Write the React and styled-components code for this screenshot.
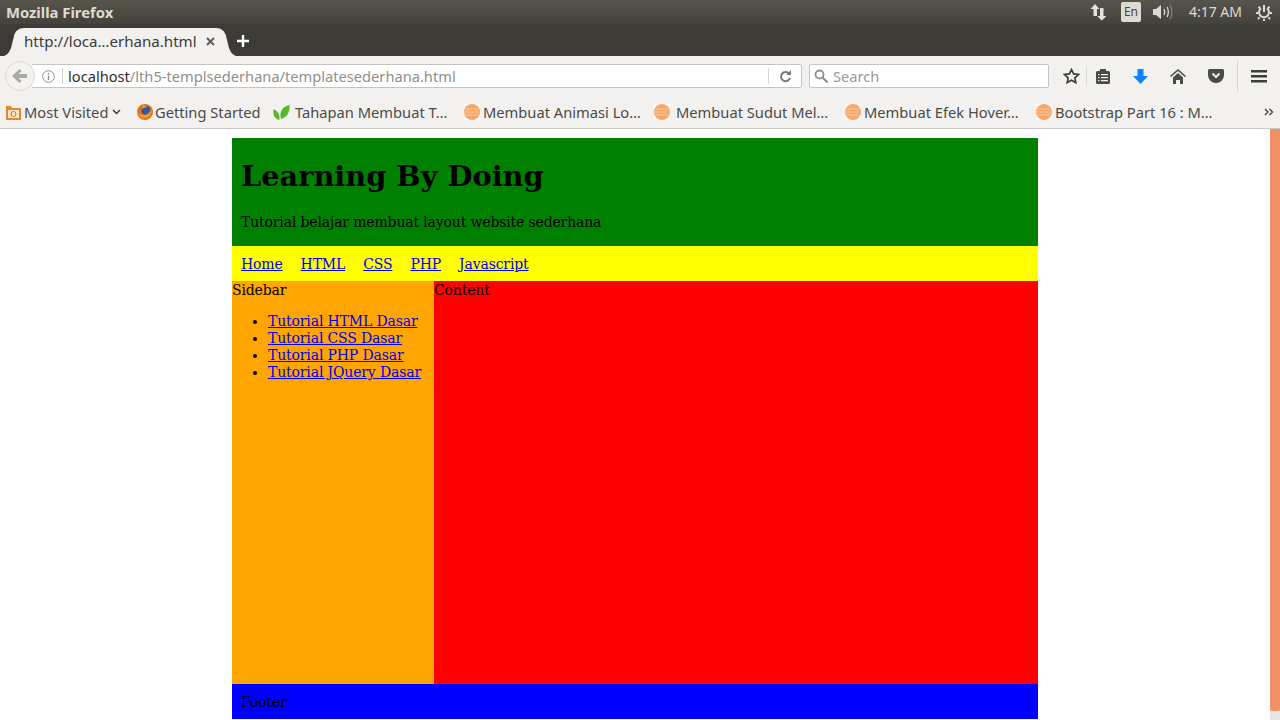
import React from "react";
import styled, { createGlobalStyle } from "styled-components";

const uiFont = `"Noto Sans", "Open Sans", sans-serif`;
const pageFont = `"DejaVu Serif", serif`;

const Global = createGlobalStyle`
  html, body {
    margin: 0;
    padding: 0;
    height: 720px;
    overflow: hidden;
    background: #fff;
  }
  * { box-sizing: border-box; }
`;

const Screen = styled.div`
  width: 1280px;
  height: 720px;
  display: flex;
  flex-direction: column;
  overflow: hidden;
`;

const TitleBar = styled.div`
  height: 24px;
  background: linear-gradient(#57544c, #44423c);
  display: flex;
  align-items: center;
  justify-content: space-between;
  padding: 0 8px 0 6px;
  color: #dfdbd2;
  font: 700 14.8px/24px ${uiFont};
`;

const Tray = styled.div`
  display: flex;
  align-items: center;
  height: 24px;
`;

const Clock = styled.span`
  font: 400 14px/24px ${uiFont};
  color: #dfdbd2;
  margin: 0 14px 0 15px;
`;

const LangBadge = styled.span`
  width: 20px;
  height: 20px;
  border-radius: 2px;
  background: #dfdbd2;
  color: #45433d;
  font: 400 12px/20px ${uiFont};
  text-align: center;
  margin: 0 11px 0 13px;
`;

const TabStrip = styled.div`
  height: 32px;
  background: #3d3b36;
  display: flex;
  align-items: flex-end;
  padding-left: 4px;
`;

const Tab = styled.div`
  width: 232px;
  height: 28px;
  background: #f2f1f0;
  clip-path: path("M0 28 C3 27 5 25 7 20 L10 8 C11 3 15 0 20 0 H212 C217 0 221 3 222 8 L225 20 C227 25 229 27 232 28 Z");
  display: flex;
  align-items: center;
  justify-content: space-between;
  padding: 0 21px 2px 20px;
  color: #3c3b37;
  font: 400 15.1px ${uiFont};
`;

const NewTab = styled.div`
  margin: 0 0 6px 0;
  height: 16px;
  display: flex;
`;

const NavBar = styled.div`
  height: 40px;
  background: #f2f1f0;
  display: flex;
  align-items: center;
  padding-left: 5px;
  position: relative;
`;

const BackButton = styled.div`
  width: 30px;
  height: 30px;
  border-radius: 50%;
  background: #f3f2f1;
  border: 1px solid #d8d6d3;
  display: flex;
  align-items: center;
  justify-content: center;
  z-index: 1;
  flex: none;
`;

const UrlBox = styled.div`
  width: 770px;
  height: 24px;
  margin-left: -3px;
  background: #fff;
  border: 1px solid #c5c4c1;
  border-left: none;
  border-radius: 0 2px 2px 0;
  display: flex;
  align-items: center;
  padding-left: 10px;
  font: 400 14.65px ${uiFont};
  color: #8f8f8b;
  flex: none;
`;

const InfoIcon = styled.span`
  width: 13px;
  display: flex;
  margin-right: 7px;
`;

const UrlDivider = styled.span`
  width: 1px;
  height: 16px;
  background: #cfcecb;
  margin-right: 5px;
`;

const Host = styled.span`
  color: #2f2f2c;
`;

const UrlText = styled.span`
  flex: 1;
  white-space: nowrap;
`;

const Reload = styled.span`
  width: 33px;
  height: 16px;
  border-left: 1px solid #d5d4d1;
  display: flex;
  align-items: center;
  justify-content: center;
`;

const SearchBox = styled.div`
  width: 240px;
  height: 24px;
  margin-left: 7px;
  background: #fff;
  border: 1px solid #c5c4c1;
  border-radius: 2px;
  display: flex;
  align-items: center;
  gap: 5px;
  padding-left: 4px;
  font: 400 14.65px ${uiFont};
  color: #9a9a96;
  flex: none;
`;

const ToolIcon = styled.span`
  width: ${p => p.$w}px;
  height: 24px;
  padding-left: ${p => p.$pad || 0}px;
  display: flex;
  align-items: center;
  justify-content: center;
  flex: none;
`;

const ToolDivider = styled.span`
  width: 1px;
  height: ${p => p.$h}px;
  background: #d8d7d4;
  flex: none;
`;

const BookmarkBar = styled.div`
  height: 33px;
  background: #f2f1f0;
  border-bottom: 1px solid #c9c8c5;
  display: flex;
  align-items: center;
  padding-left: 6px;
  font: 400 14.7px ${uiFont};
  color: #4b4b47;
  position: relative;
`;

const Bookmark = styled.div`
  width: ${p => p.$w}px;
  display: flex;
  align-items: center;
  gap: ${p => p.$gap || 3}px;
  white-space: nowrap;
  flex: none;
`;

const Chevron = styled.svg`
  margin-left: 1px;
`;

const Chevrons = styled.span`
  position: absolute;
  right: 6px;
  top: 12px;
  display: flex;
`;

const Viewport = styled.div`
  flex: 1;
  display: flex;
  background: #fff;
  min-height: 0;
`;

const PageArea = styled.div`
  width: 1270px;
  padding-top: 9px;
  font: 400 14px/17px ${pageFont};
  letter-spacing: -0.15px;
  color: #000;
`;

const ScrollTrack = styled.div`
  width: 10px;
  background: #e5e5e5;
`;

const ScrollThumb = styled.div`
  height: 582px;
  background: #f09068;
  border-radius: 0 0 2px 2px;
`;

const Container = styled.div`
  width: 806px;
  margin-left: 232px;
`;

const Header = styled.header`
  height: 108px;
  background: green;
  padding: 22px 9px 0;
  h1 {
    margin: 0;
    font: 700 28.8px/32px ${pageFont};
    letter-spacing: 0;
  }
  p {
    margin: 22px 0 0;
  }
`;

const Menu = styled.nav`
  height: 35px;
  background: yellow;
  display: flex;
  gap: 18px;
  padding: 10px 9px 0;
`;

const Link = styled.a`
  color: #00e;
  text-decoration: underline;
`;

const Columns = styled.div`
  display: flex;
  height: 403px;
`;

const Sidebar = styled.aside`
  width: 202px;
  padding-top: 1px;
  background: orange;
  ul {
    margin: 14px 0 0;
    padding-left: 36px;
  }
`;

const Content = styled.main`
  flex: 1;
  padding-top: 1px;
  background: red;
`;

const Footer = styled.footer`
  height: 35px;
  background: blue;
  padding: 10px 9px 0;
`;

const Favicon = () => (
  <svg width="16" height="16" viewBox="0 0 16 16">
    <rect width="16" height="16" fill="#fbfaf8" />
    <circle cx="8" cy="8" r="8" fill="#f6a768" />
    <path d="M2 5h12M1 8h14M2 11h12" stroke="#fcdcc0" strokeWidth="1.2" strokeDasharray="1.5 .8" />
  </svg>
);

const marks = [
  { label: "Membuat Animasi Lo…", w: 190 },
  { label: "Membuat Sudut Mel…", w: 191, gap: 6 },
  { label: "Membuat Efek Hover…", w: 191 },
  { label: "Bootstrap Part 16 : M…", w: 190 },
];

export default function App() {
  return (
    <Screen>
      <Global />
      <TitleBar>
        Mozilla Firefox
        <Tray>
          <svg width="18" height="18" viewBox="0 0 18 18" fill="#e4e1da">
            <path d="M5 1l4.500 5H7v7H3.500V6H.6zM10 5h3.500v8h3L11.800 17.500 7.200 13H10z" />
          </svg>
          <LangBadge>En</LangBadge>
          <svg width="22" height="16" viewBox="0 0 22 16" fill="none">
            <path d="M1 5h3l5-4v14l-5-4H1z" fill="#dfdbd2" />
            <path d="M12 5c1 2 1 4 0 6" stroke="#dfdbd2" strokeWidth="1.4" />
            <path d="M15 3c1.600 3 1.600 7 0 10" stroke="#dfdbd2" strokeWidth="1.300" />
            <path d="M18 1c2.500 4 2.500 10 0 14" stroke="#85827a" strokeWidth="1.200" />
          </svg>
          <Clock>4:17 AM</Clock>
          <svg width="16" height="17" viewBox="0 0 16 17" fill="none" stroke="#dfdbd2">
            <path d="M5 4.200a5 5 0 1 0 6 0" strokeWidth="2" />
            <path d="M8 1v7" strokeWidth="2" />
            <path d="M2.500 2.800l1.500 1.500M13.500 2.800L12 4.300M0 9h2M14 9h2M2 15l1.500-1.500M14 15l-1.500-1.500M8 17v-2" strokeWidth="2" />
          </svg>
        </Tray>
      </TitleBar>

      <TabStrip>
        <Tab>
          http://loca…erhana.html
          <svg width="9" height="9" viewBox="0 0 9 9" stroke="#5d5c58" strokeWidth="2">
            <path d="M1 1l7 7M8 1l-7 7" />
          </svg>
        </Tab>
        <NewTab>
          <svg width="14" height="14" viewBox="0 0 14 14" stroke="#fff" strokeWidth="2.400">
            <path d="M7 1v12M1 7h12" />
          </svg>
        </NewTab>
      </TabStrip>

      <NavBar>
        <BackButton>
          <svg width="16" height="14" viewBox="0 0 16 14" fill="#a9a9a6">
            <path d="M7.500 0l2 2-3 3H15v4H6.500l3 3-2 2L0 7z" />
          </svg>
        </BackButton>
        <UrlBox>
          <InfoIcon>
            <svg width="13" height="13" viewBox="0 0 13 13" fill="none" stroke="#8d8d89">
              <circle cx="6.500" cy="6.500" r="5.800" />
              <path d="M6.500 5.500v4.500M6.500 3v1.500" strokeWidth="1.400" />
            </svg>
          </InfoIcon>
          <UrlDivider />
          <UrlText>
            <Host>localhost</Host>/lth5-templsederhana/templatesederhana.html
          </UrlText>
          <Reload>
            <svg width="13" height="13" viewBox="0 0 13 13" fill="none" stroke="#6f7a86" strokeWidth="2">
              <path d="M11 8a4.600 4.600 0 1 1-1-4.500" />
              <path d="M7 5h5V0z" fill="#6f7a86" stroke="none" />
            </svg>
          </Reload>
        </UrlBox>
        <SearchBox>
          <svg width="14" height="14" viewBox="0 0 14 14" fill="none" stroke="#8d8d89" strokeWidth="1.800">
            <circle cx="5.500" cy="5.500" r="4" />
            <path d="M8.500 8.500l5 5" strokeWidth="2.200" />
          </svg>
          Search
        </SearchBox>
        <ToolIcon $w={37} $pad={7}>
          <svg width="17" height="16" viewBox="0 0 17 16" fill="none" stroke="#3d3d3a" strokeWidth="1.700">
            <path d="M8.500 1.500l2.100 4.400 4.800.6-3.500 3.300.9 4.800-4.300-2.300-4.300 2.300.9-4.800L1.600 6.500l4.800-.6z" />
          </svg>
        </ToolIcon>
        <ToolDivider $h={18} />
        <ToolIcon $w={31}>
          <svg width="14" height="15" viewBox="0 0 14 15">
            <path d="M1.500 2H4V0h6v2h2.500Q14 2 14 3.500v10q0 1.500-1.500 1.500h-11Q0 15 0 13.500v-10Q0 2 1.500 2z" fill="#4a4a47" />
            <path d="M2 5h1.500v1.200H2zM5 5h7v1.200H5zM2 8h1.500v1.200H2zM5 8h7v1.200H5zM2 11h1.500v1.200H2zM5 11h7v1.200H5z" fill="#f2f1f0" />
          </svg>
        </ToolIcon>
        <ToolIcon $w={44}>
          <svg width="15" height="15" viewBox="0 0 15 15" fill="#0a84ff">
            <path d="M4.500 0h6v7H15l-7.500 8L0 7h4.500z" />
          </svg>
        </ToolIcon>
        <ToolIcon $w={32}>
          <svg width="16" height="15" viewBox="0 0 16 15" fill="#4a4a47">
            <path d="M8 0L0 7l1 1 7-6 7 6 1-1z" />
            <path d="M3 8.500L8 4l5 4.500V15h-3v-4H6v4H3z" />
          </svg>
        </ToolIcon>
        <ToolIcon $w={43}>
          <svg width="16" height="14" viewBox="0 0 16 14">
            <path d="M1.500 0h13Q16 0 16 1.500V6a8 8 0 0 1-16 0V1.500Q0 0 1.500 0z" fill="#4a4a47" />
            <path d="M4.500 4.500L8 8l3.500-3.500" stroke="#f2f1f0" strokeWidth="2" fill="none" />
          </svg>
        </ToolIcon>
        <ToolDivider $h={32} />
        <ToolIcon $w={42}>
          <svg width="16" height="13" viewBox="0 0 16 13" fill="#3d3d3a">
            <path d="M0 0h16v2.500H0zM0 5h16v2.500H0zM0 10h16v2.500H0z" />
          </svg>
        </ToolIcon>
      </NavBar>

      <BookmarkBar>
        <Bookmark $w={131}>
          <svg width="15" height="15" viewBox="0 0 15 15">
            <path d="M0 1h5l1 2h9v12H0z" fill="#e08a2c" />
            <rect x="2" y="5" width="11" height="8" fill="#f7e7cf" />
            <circle cx="7.500" cy="9" r="2.500" fill="none" stroke="#c8701c" />
          </svg>
          Most Visited
          <Chevron width="9" height="6" viewBox="0 0 9 6" fill="none" stroke="#3d3d3a" strokeWidth="1.500">
            <path d="M1 1l3.500 3.500L8 1" />
          </Chevron>
        </Bookmark>
        <Bookmark $w={136} $gap={2}>
          <svg width="16" height="16" viewBox="0 0 16 16">
            <circle cx="8" cy="8" r="8" fill="#e8711c" />
            <circle cx="9" cy="6.500" r="4.500" fill="#2a5aa8" />
            <path d="M1 8c1 5 6 7 10 5 3-2 4-5 3-8-1 3-3 6-7 6-3 0-5-1-6-3z" fill="#f2a31c" />
            <path d="M6 1c2 0 3 1 4 3-2-1-3 0-5 1z" fill="#f2a31c" />
          </svg>
          Getting Started
        </Bookmark>
        <Bookmark $w={191} $gap={5}>
          <svg width="17" height="15" viewBox="0 0 15 14" fill="#5ab82a">
            <path d="M5.500 14C0 13-.5 7 0 4c3 1 6.500 4 5.500 10zM7 13C5 6 9 1 15 0c.5 6-2 12-8 13z" />
          </svg>
          Tahapan Membuat T…
        </Bookmark>
        {marks.map(m => (
          <Bookmark key={m.label} $w={m.w} $gap={m.gap}>
            <Favicon />
            {m.label}
          </Bookmark>
        ))}
        <Chevrons>
          <svg width="10" height="8" viewBox="0 0 10 8" fill="none" stroke="#3d3d3a" strokeWidth="1.300">
            <path d="M1 1l3 3-3 3M5.500 1l3 3-3 3" />
          </svg>
        </Chevrons>
      </BookmarkBar>

      <Viewport>
        <PageArea>
          <Container>
            <Header>
              <h1>Learning By Doing</h1>
              <p>Tutorial belajar membuat layout website sederhana</p>
            </Header>
            <Menu>
              <Link href="#">Home</Link>
              <Link href="#">HTML</Link>
              <Link href="#">CSS</Link>
              <Link href="#">PHP</Link>
              <Link href="#">Javascript</Link>
            </Menu>
            <Columns>
              <Sidebar>
                Sidebar
                <ul>
                  <li><Link href="#">Tutorial HTML Dasar</Link></li>
                  <li><Link href="#">Tutorial CSS Dasar</Link></li>
                  <li><Link href="#">Tutorial PHP Dasar</Link></li>
                  <li><Link href="#">Tutorial JQuery Dasar</Link></li>
                </ul>
              </Sidebar>
              <Content>Content</Content>
            </Columns>
            <Footer>Footer</Footer>
          </Container>
        </PageArea>
        <ScrollTrack>
          <ScrollThumb />
        </ScrollTrack>
      </Viewport>
    </Screen>
  );
}
